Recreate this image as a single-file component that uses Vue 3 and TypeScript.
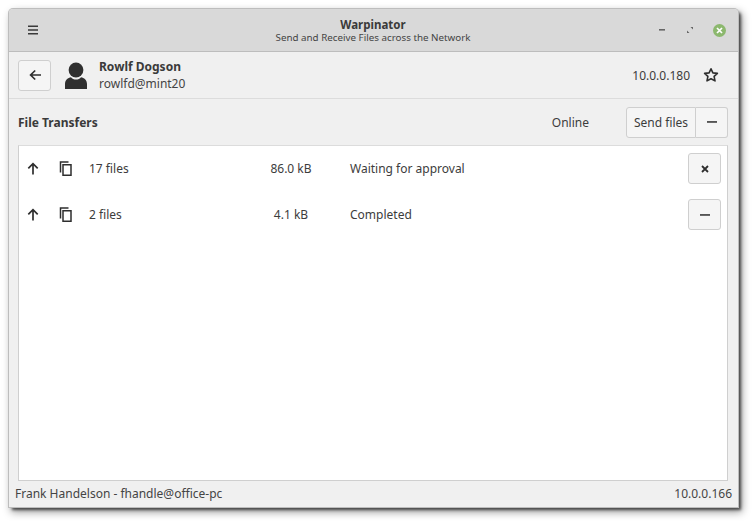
<script setup lang="ts">
interface Transfer { count: string; size: string; status: string; action: 'cancel' | 'remove' }
const transfers: Transfer[] = [
  { count: '17 files', size: '86.0 kB', status: 'Waiting for approval', action: 'cancel' },
  { count: '2 files', size: '4.1 kB', status: 'Completed', action: 'remove' },
]
</script>

<template>
  <div class="page">
    <div class="window">
      <header class="titlebar">
        <div class="side">
          <svg class="menu" width="12" height="12" viewBox="0 0 12 12"><path d="M1 1.5h10v1.4H1zM1 5.3h10v1.4H1zM1 9.1h10v1.4H1z" fill="#3a3a3a"/></svg>
        </div>
        <div class="title">
          <div class="app">Warpinator</div>
          <div class="sub">Send and Receive Files across the Network</div>
        </div>
        <div class="side controls">
          <svg width="10" height="10" viewBox="0 0 10 10"><rect x="2" y="4" width="6" height="1.6" fill="#666"/></svg>
          <svg width="10" height="10" viewBox="0 0 10 10"><path d="M5.5 2h2.500v2.500zM2 5.500V8h2.500z" fill="#666"/></svg>
          <span class="close"><svg width="9" height="9" viewBox="0 0 9 9"><path d="M2 2l5 5M7 2l-5 5" stroke="#fff" stroke-width="1.7"/></svg></span>
        </div>
      </header>

      <section class="peer">
        <button class="btn square back">
          <svg width="14" height="14" viewBox="0 0 14 14"><path d="M13 7H3M7.2 2.5 2.6 7l4.6 4.5" fill="none" stroke="#2e2e2e" stroke-width="1.7"/></svg>
        </button>
        <svg class="avatar" width="24" height="27" viewBox="0 0 24 27"><circle cx="12" cy="8" r="7.4" fill="#2f2f2f"/><path d="M1 27v-5c0-4 3-6.400 6-6.800 1 1.500 3 2.300 5 2.300s4-.8 5-2.300c3 .4 6 2.800 6 6.800v5z" fill="#2f2f2f"/></svg>
        <div class="who">
          <div class="name">Rowlf Dogson</div>
          <div class="handle">rowlfd@mint20</div>
        </div>
        <span class="ip">10.0.0.180</span>
        <svg class="star" width="16" height="16" viewBox="0 0 16 16"><path d="M8 1.800l1.900 4.100 4.500.5-3.300 3 .9 4.500L8 11.700l-4 2.200.9-4.500-3.300-3 4.500-.5z" fill="none" stroke="#2e2e2e" stroke-width="1.600" stroke-linejoin="round"/></svg>
      </section>

      <main class="content">
        <div class="toolbar">
          <strong class="heading">File Transfers</strong>
          <span class="online">Online</span>
          <div class="group">
            <button class="btn send">Send files</button>
            <button class="btn minus"><svg width="10" height="10" viewBox="0 0 10 10"><rect y="4.200" width="10" height="1.500" fill="#2e2e2e"/></svg></button>
          </div>
        </div>

        <div class="list">
          <div v-for="t in transfers" :key="t.count" class="row">
            <svg class="up" width="12" height="13" viewBox="0 0 12 13"><path d="M6 12.500V2M1.300 6.400 6 1.700l4.700 4.700" fill="none" stroke="#2e2e2e" stroke-width="1.700"/></svg>
            <svg class="files" width="13" height="15" viewBox="0 0 13 15"><path d="M9.500 1H1.500v10.500M4 3.800h8v10.400H4z" fill="none" stroke="#2e2e2e" stroke-width="1.500"/></svg>
            <span class="count">{{ t.count }}</span>
            <span class="size">{{ t.size }}</span>
            <span class="status">{{ t.status }}</span>
            <button class="btn square action">
              <svg v-if="t.action === 'cancel'" width="8" height="8" viewBox="0 0 8 8"><path d="M1 1l6 6M7 1 1 7" stroke="#2e2e2e" stroke-width="1.800"/></svg>
              <svg v-else width="10" height="10" viewBox="0 0 10 10"><rect y="4.200" width="10" height="1.500" fill="#2e2e2e"/></svg>
            </button>
          </div>
        </div>
      </main>

      <footer class="status-bar">
        <span>Frank Handelson - fhandle@office-pc</span>
        <span>10.0.0.166</span>
      </footer>
    </div>
  </div>
</template>

<style>
html, body { background: #fff; margin: 0; }
</style>

<style scoped>
.page {
  box-sizing: border-box;
  width: 752px;
  height: 521px;
  padding: 9px 14px 14px 9px;
  background: #fff;
}
.window {
  box-sizing: border-box;
  width: 729px;
  height: 498px;
  display: flex;
  flex-direction: column;
  background: #f0f0f0;
  border-radius: 4px 4px 0 0;
  box-shadow: 0 0 0 1px #bdbdbd, 3px 3px 3px rgba(0, 0, 0, .6), 3px 4px 9px 1px rgba(0, 0, 0, .4);
  color: #3c3c3c;
  font: 12px "Noto Sans", sans-serif;
}
.titlebar {
  height: 42px;
  flex: none;
  display: grid;
  grid-template-columns: 1fr auto 1fr;
  align-items: center;
  background: #d9d9d9;
  border-bottom: 1px solid #bdbdbd;
  border-radius: 4px 4px 0 0;
  padding: 0 12px 0 18px;
}
.side { display: flex; align-items: center; }
.title { text-align: center; line-height: 14px; padding-top: 3px; margin-right: 7px; }
.app { font-weight: 700; font-size: 11.500px; color: #3a3a3a; }
.sub { font-size: 9.800px; color: #444; margin-top: -1px; }
.controls { justify-content: flex-end; gap: 18px; }
.close { width: 13px; height: 13px; border-radius: 50%; background: #8cb86e; display: flex; align-items: center; justify-content: center; }
.peer {
  height: 46px;
  flex: none;
  display: flex;
  align-items: center;
  padding: 0 19px 0 9px;
  border-bottom: 1px solid #dcdcdc;
}
.btn {
  box-sizing: border-box;
  background: #f5f5f5;
  border: 1px solid #cfcfcf;
  border-radius: 3px;
  padding: 0;
  color: #3c3c3c;
  font: inherit;
  display: flex;
  align-items: center;
  justify-content: center;
}
.square { width: 33px; height: 31px; }
.avatar { margin-left: 13px; }
.who { margin-left: 11px; flex: 1; line-height: 17px; }
.name { font-weight: 700; color: #3a3a3a; }
.handle { color: #444; }
.ip { margin-right: 13px; }
.content { flex: 1; display: flex; flex-direction: column; padding: 0 10px 0 9px; min-height: 0; }
.toolbar { height: 46px; flex: none; display: flex; align-items: center; }
.heading { flex: 1; font-weight: 700; color: #3a3a3a; }
.online { margin-right: 37px; }
.group { display: flex; }
.send { width: 70px; height: 31px; border-radius: 3px 0 0 3px; }
.minus { width: 32px; height: 31px; border-left: 0; border-radius: 0 3px 3px 0; }
.list {
  flex: 1;
  background: #fff;
  border: 1px solid #cfcfcf;
  border-top-color: #dcdcdc;
  min-height: 0;
}
.row { box-sizing: border-box; height: 46px; display: flex; align-items: center; padding: 0 6px 1px 8px; }
.files { margin-left: 20px; }
.count { margin-left: 17px; width: 156px; }
.size { width: 94px; text-align: center; margin-right: 11px; white-space: nowrap; margin-left: -1px; }
.status { flex: 1; margin-left: 1px; }
.status-bar {
  box-sizing: border-box;
  height: 26px;
  flex: none;
  display: flex;
  align-items: center;
  justify-content: space-between;
  padding: 0 6px 2px;
  color: #444;
}
</style>
